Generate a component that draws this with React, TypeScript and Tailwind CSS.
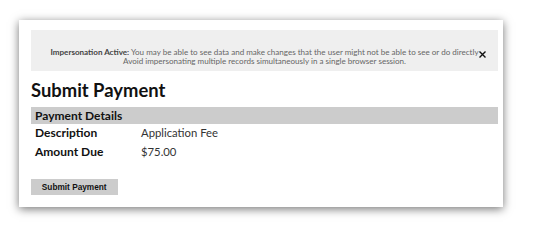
import React from 'react';

const font = { fontFamily: 'Lato, "Open Sans", sans-serif' };

const App = () => {
  return (
    <div className="w-[548px] h-[228px] bg-white pt-[20px] pl-[19px]" style={font}>
      <div className="w-[484px] h-[187px] bg-white shadow-[0_2px_9px_rgba(0,0,0,0.55)] pt-[10px] pl-[12px] pr-[5px]">
        <div className="relative bg-[#efefef] h-[41px] pt-[18px] text-center text-[8.05px] leading-[9px] text-[#666]">
          <p>
            <span className="font-bold text-[#444]">Impersonation Active:</span> You may be able to see data and make
            changes that the user might not be able to see or do directly
          </p>
          <p>Avoid impersonating multiple records simultaneously in a single browser session.</p>
          <button className="absolute left-[448px] top-[21px] text-[#111]">
            <svg width="7" height="7" viewBox="0 0 7 7">
              <path d="M0.5 0.5L6.5 6.5M6.5 0.5L0.5 6.5" stroke="#111" strokeWidth="1.4" />
            </svg>
          </button>
        </div>
        <h1 className="mt-[4px] h-[30px] leading-[30px] text-[18.4px] font-bold text-[#111]">Submit Payment</h1>
        <div className="mt-[2px] h-[17px] bg-[#cccccc] pl-[4px] text-[12px] leading-[17px] font-bold text-[#111]">
          Payment Details
        </div>
        <div className="pl-[4px] text-[12px] text-[#111]">
          <div className="flex h-[19px] leading-[17px]">
            <span className="w-[106px] font-bold">Description</span>
            <span className="text-[#333] text-[11.3px]">Application Fee</span>
          </div>
          <div className="flex h-[19px] leading-[18px]">
            <span className="w-[106px] font-bold">Amount Due</span>
            <span className="text-[#333] text-[11.3px]">$75.00</span>
          </div>
        </div>
        <button
          className="mt-[17px] w-[87px] h-[16px] bg-[#cccccc] text-[9.5px] font-bold text-[#111] leading-[16px]"
          style={{ fontFamily: '"Liberation Sans", Arial, sans-serif' }}
        >
          <span className="inline-block scale-x-[0.87]">Submit Payment</span>
        </button>
      </div>
    </div>
  );
};

export default App;
